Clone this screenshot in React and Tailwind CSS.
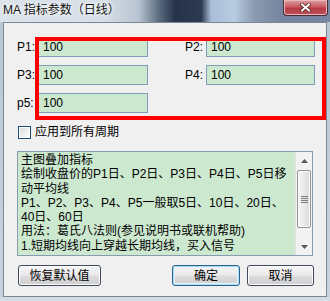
const memo = [
  '主图叠加指标',
  '绘制收盘价的P1日、P2日、P3日、P4日、P5日移',
  '动平均线',
  'P1、P2、P3、P4、P5一般取5日、10日、20日、',
  '40日、60日',
  '用法：葛氏八法则(参见说明书或联机帮助)',
  '1.短期均线向上穿越长期均线，买入信号',
];

function Field({ wide }) {
  return (
    <div
      className={`flex h-[20px] items-center border border-[#7f9db9] bg-[#cce8cf] pl-[4px] ${
        wide ? 'w-[110px]' : 'w-[109px]'
      }`}
    >
      100
    </div>
  );
}

function Arrow({ down }) {
  return (
    <svg width="7" height="4" viewBox="0 0 7 4">
      <path d={down ? 'M0 0H7L3.5 4Z' : 'M0 4H7L3.5 0Z'} fill="#5a5a5a" />
    </svg>
  );
}

function Button({ label, width, primary }) {
  return (
    <div
      className={`flex h-[21px] items-center justify-center rounded-[3px] border bg-[linear-gradient(180deg,#f4f4f4_0%,#ebebeb_48%,#dddddd_52%,#cfcfcf_100%)] ${width} ${
        primary
          ? 'border-[#2c628b] shadow-[inset_0_0_0_1px_#a6dcf4,inset_0_0_0_2px_#e4f4fc]'
          : 'border-[#3e4a5a] shadow-[inset_0_0_0_1px_#fcfcfc]'
      }`}
    >
      {label}
    </div>
  );
}

export default function App() {
  return (
    <div className="relative flex h-[301px] w-[330px] flex-col overflow-hidden bg-[linear-gradient(180deg,#b8c5d2_0%,#c9d3de_100%)] font-['Liberation_Sans','Noto_Sans_CJK_SC',sans-serif] text-[12px] text-black">
      {/* Title bar */}
      <div className="flex h-[22px] shrink-0 items-start justify-between bg-[linear-gradient(90deg,#dbe3eb_0%,#d6dee7_32%,#b7c3d0_42%,#5e6e82_48%,#26324a_53%,#2c3a52_61%,#a9bfd8_64%,#b8cce2_71%,#8b9bb0_77%,#7686a0_85%)]">
        <div className="whitespace-pre pl-[3px] pt-[3px] leading-[14px] text-[#111] [text-shadow:0_0_5px_#fff,0_0_3px_#fff]">
          MA 指标参数（日线）
        </div>
        <div className="mr-[2px] flex h-[16px] w-[45px] items-center justify-center rounded-b-[4px] border border-t-0 border-[#4a2a30] bg-[linear-gradient(180deg,#dca0a4_0%,#c85a62_45%,#b83c46_55%,#b8505a_100%)] shadow-[inset_0_0_0_1px_#e8b8bc]">
          <svg width="11" height="9" viewBox="0 0 11 9">
            <path d="M2 1.5L9 7.5M9 1.5L2 7.5" stroke="#4a2024" strokeWidth="3.6" strokeLinecap="square" />
            <path d="M2 1.5L9 7.5M9 1.5L2 7.5" stroke="#ffffff" strokeWidth="2" strokeLinecap="square" />
          </svg>
        </div>
      </div>

      {/* Window body */}
      <div className="flex h-[275px] shrink-0">
        <div className="w-[3px]" />
        <div className="flex w-[324px] flex-col border border-[#7a8896] bg-[#f0f0f0] pt-[14px]">
          <div className="flex flex-col gap-[8px] pl-[13px]">
            <div className="flex h-[20px] items-center">
              <span className="w-[21px]">P1:</span>
              <Field wide />
              <span className="ml-[37px] w-[21px]">P2:</span>
              <Field />
            </div>
            <div className="flex h-[20px] items-center">
              <span className="w-[21px]">P3:</span>
              <Field wide />
              <span className="ml-[37px] w-[21px]">P4:</span>
              <Field />
            </div>
            <div className="flex h-[20px] items-center">
              <span className="w-[21px]">p5:</span>
              <Field wide />
            </div>
          </div>

          <div className="mt-[13px] flex h-[13px] items-center pl-[14px]">
            <div className="h-[13px] w-[13px] border border-[#1c4a78] bg-[linear-gradient(135deg,#d8d8d8_0%,#f4f4f4_70%,#ffffff_100%)] shadow-[inset_0_0_0_1px_#ffffff]" />
            <span className="ml-[4px] leading-[13px]">应用到所有周期</span>
          </div>

          <div className="ml-[13px] mt-[12px] flex h-[105px] w-[296px] border border-[#8a9cb0] bg-[#cce8cf]">
            <div className="flex-1 overflow-hidden pl-[3px] pt-[1px] leading-[14.3px]">
              {memo.map((line) => (
                <div key={line} className="whitespace-nowrap">
                  {line}
                </div>
              ))}
            </div>
            <div className="flex w-[17px] flex-col border-l border-[#e2e2e2] bg-[#f2f2f2]">
              <div className="flex h-[17px] items-center justify-center">
                <Arrow />
              </div>
              <div className="flex-1 px-[1px] pt-[1px]">
                <div className="flex h-[58px] flex-col items-center justify-center gap-[1px] rounded-[2px] border border-[#959595] bg-[linear-gradient(90deg,#f6f6f6_0%,#e9e9e9_50%,#dadada_100%)] shadow-[inset_0_0_0_1px_#fafafa]">
                  <div className="h-[1px] w-[7px] bg-[#7b7b7b]" />
                  <div className="h-[1px] w-[7px] bg-[#7b7b7b]" />
                  <div className="h-[1px] w-[7px] bg-[#7b7b7b]" />
                  <div className="h-[1px] w-[7px] bg-[#7b7b7b]" />
                </div>
              </div>
              <div className="flex h-[17px] items-center justify-center">
                <Arrow down />
              </div>
            </div>
          </div>

          <div className="mt-[9px] flex pl-[14px]">
            <Button label="恢复默认值" width="w-[83px]" />
            <div className="ml-[71px]">
              <Button label="确定" width="w-[68px]" primary />
            </div>
            <div className="ml-[7px]">
              <Button label="取消" width="w-[67px]" />
            </div>
          </div>
        </div>
        <div className="w-[3px]" />
      </div>
      <div className="flex-1 bg-[#d3dbe4]" />

      {/* Red annotation box */}
      <div className="pointer-events-none absolute left-[35px] top-[37px] h-[83px] w-[291px] border-4 border-[#ff0000]" />
    </div>
  );
}
